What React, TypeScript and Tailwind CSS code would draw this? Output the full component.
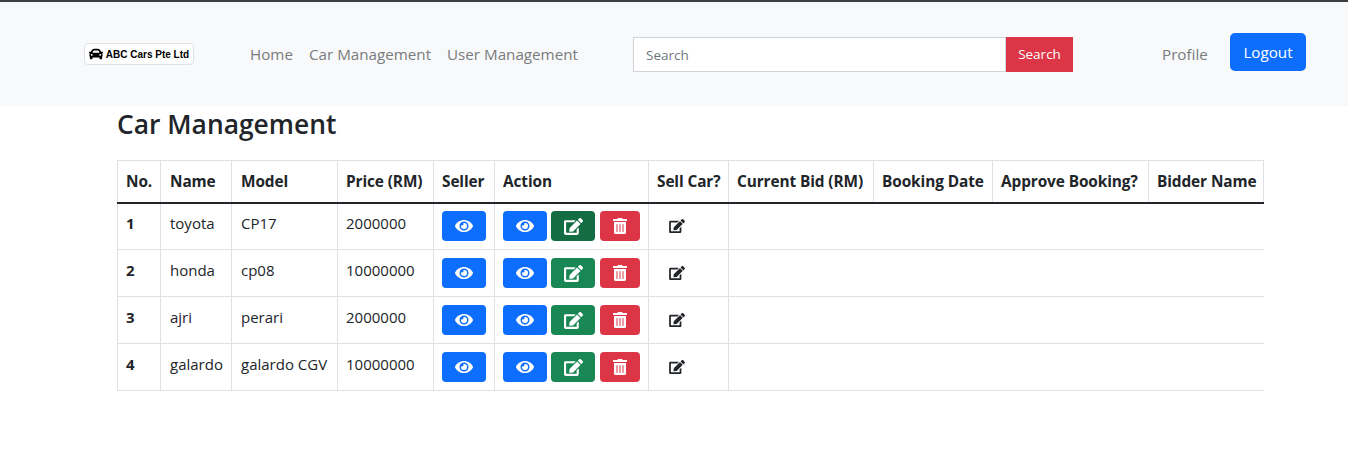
import React from 'react';
import { FaCar, FaEye, FaEdit, FaTrashAlt } from 'react-icons/fa';

const cars = [
  { no: 1, name: 'toyota', model: 'CP17', price: '2000000' },
  { no: 2, name: 'honda', model: 'cp08', price: '10000000' },
  { no: 3, name: 'ajri', model: 'perari', price: '2000000' },
  { no: 4, name: 'galardo', model: 'galardo CGV', price: '10000000' },
];

const headers = [
  { label: 'No.', width: 'w-[43px] pl-2' },
  { label: 'Name', width: 'w-[71px] pl-[9px]' },
  { label: 'Model', width: 'w-[106px] pl-[9px]' },
  { label: 'Price (RM)', width: 'w-[96px] pl-2' },
  { label: 'Seller', width: 'w-[61px] pl-2' },
  { label: 'Action', width: 'w-[154px] pl-2' },
  { label: 'Sell Car?', width: 'w-[80px] pl-2' },
  { label: 'Current Bid (RM)', width: 'w-[145px] pl-2' },
  { label: 'Booking Date', width: 'w-[119px] pl-2' },
  { label: 'Approve Booking?', width: 'w-[156px] pl-2' },
  { label: 'Bidder Name', width: 'w-[115px] pl-2' },
];

function IconButton({ color, w, children }: { color: string; w: string; children: React.ReactNode }) {
  return (
    <button className={`${color} ${w} h-[30px] rounded flex items-center justify-center text-white`}>
      {children}
    </button>
  );
}

export default function App() {
  return (
    <div className="min-h-[451px] bg-white text-[#212529] font-['Open_Sans','Noto_Sans',sans-serif]">
      <nav className="h-[106px] bg-[#f8f9fa] border-t-2 border-[#3a3f44] flex items-center pl-[84px]">
        <div className="w-[110px] h-[22px] bg-white border border-[#dee2e6] rounded flex items-center justify-center gap-[3px] text-black">
          <FaCar className="w-[14px] h-[14px]" />
          <span className="font-['Liberation_Sans',sans-serif] font-bold text-[10px] whitespace-nowrap">ABC Cars Pte Ltd</span>
        </div>
        <div className="ml-[56px] flex gap-[16px] text-[15.2px] text-[#7a7b7d]">
          <a className="w-[43px] whitespace-nowrap">Home</a>
          <a className="w-[122px] whitespace-nowrap">Car Management</a>
          <a className="w-[130px] whitespace-nowrap">User Management</a>
        </div>
        <form className="ml-[56px] flex h-[35px]">
          <input
            placeholder="Search"
            className="w-[373px] h-full bg-white border border-[#ced4da] px-3 pt-[1px] text-[13.5px] placeholder:text-[#6c757d] outline-none"
          />
          <button type="button" className="w-[67px] h-full bg-[#dc3545] text-white text-[13.5px]">Search</button>
        </form>
        <a className="ml-[89px] w-[45px] text-[15.2px] text-[#7a7b7d]">Profile</a>
        <button className="ml-[23px] mb-[4px] w-[76px] h-[38px] bg-[#0d6efd] text-white text-[15.2px] rounded-[5px]">Logout</button>
      </nav>

      <main className="pl-[117px]">
        <h1 className="text-[26.4px] leading-[36px] font-semibold mb-[18px]">Car Management</h1>
        <table className="table-fixed border-collapse w-[1146px] text-[15px]">
          <thead>
            <tr className="h-[42px] border-b-2 border-[#212529]">
              {headers.map((h) => (
                <th key={h.label} className={`${h.width} border border-[#dee2e6] border-b-[#212529] border-b-2 text-left text-[15.4px] tracking-[-0.1px] font-bold whitespace-nowrap`}>
                  {h.label}
                </th>
              ))}
            </tr>
          </thead>
          <tbody>
            {cars.map((car) => (
              <tr key={car.no} className="h-[47px]">
                <td className="border border-[#dee2e6] px-2 pb-[6px] font-bold">{car.no}</td>
                <td className="border border-[#dee2e6] pl-[9px] pb-[6px]">{car.name}</td>
                <td className="border border-[#dee2e6] pl-[9px] pb-[6px] whitespace-nowrap">{car.model}</td>
                <td className="border border-[#dee2e6] px-2 pb-[6px]">{car.price}</td>
                <td className="border border-[#dee2e6] px-2">
                  <IconButton color="bg-[#0d6efd]" w="w-[44px]"><FaEye className="w-[18px] h-[18px]" /></IconButton>
                </td>
                <td className="border border-[#dee2e6] px-2">
                  <div className="flex gap-[4px]">
                    <IconButton color="bg-[#0d6efd]" w="w-[44px]"><FaEye className="w-[18px] h-[18px]" /></IconButton>
                    <IconButton color={car.no === 1 ? 'bg-[#146c43]' : 'bg-[#198754]'} w="w-[44px]"><FaEdit className="w-[19px] h-[17px]" /></IconButton>
                    <IconButton color="bg-[#dc3545] ml-[1px]" w="w-[40px]"><FaTrashAlt className="w-[14px] h-[16px]" /></IconButton>
                  </div>
                </td>
                <td className="border border-[#dee2e6] pl-[20px]">
                  <FaEdit className="w-[16px] h-[14px]" />
                </td>
                <td className="border-l border-b border-[#dee2e6]" colSpan={4}></td>
              </tr>
            ))}
          </tbody>
        </table>
      </main>
    </div>
  );
}
